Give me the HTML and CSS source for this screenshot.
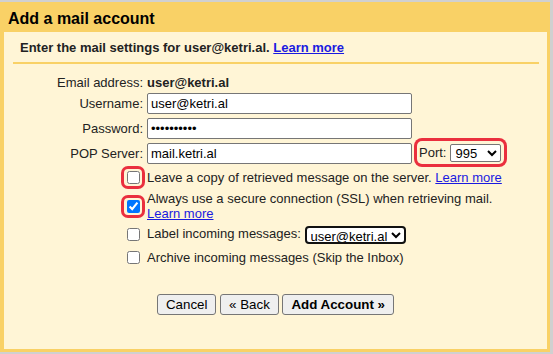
FILE: index.html
```html
<!DOCTYPE html>
<html lang="en">

<head>
  <meta charset="UTF-8">
  <title>Add a mail account</title>
  <link rel="stylesheet" href="styles.css">
</head>

<body>
  <div class="dialog">
    <div class="title">Add a mail account</div>
    <div class="panel">
      <div class="intro">Enter the mail settings for user@ketri.al. <a href="#">Learn more</a></div>
      <div class="rule"></div>

      <!-- Form fields -->
      <table class="form">
        <tr class="row-email">
          <td class="label">Email address:</td>
          <td class="field"><b>user@ketri.al</b></td>
        </tr>
        <tr>
          <td class="label">Username:</td>
          <td class="field"><input type="text" class="text-input" value="user@ketri.al"></td>
        </tr>
        <tr>
          <td class="label">Password:</td>
          <td class="field"><input type="password" class="text-input" value="secret1234"></td>
        </tr>
        <tr>
          <td class="label">POP Server:</td>
          <td class="field"><input type="text" class="text-input" value="mail.ketri.al"><span class="hl port">Port:
              <select class="port-select">
                <option>995</option>
                <option>110</option>
              </select></span></td>
        </tr>
        <tr>
          <td class="label"><span class="hl hl-check"><input type="checkbox"></span></td>
          <td class="field">Leave a copy of retrieved message on the server. <a href="#">Learn more</a></td>
        </tr>
        <tr>
          <td class="label"><span class="hl hl-check"><input type="checkbox" checked></span></td>
          <td class="field">Always use a secure connection (SSL) when retrieving mail. <a href="#">Learn more</a></td>
        </tr>
        <tr>
          <td class="label"><input type="checkbox"></td>
          <td class="field">Label incoming messages: <select class="label-select">
              <option>user@ketri.al</option>
            </select></td>
        </tr>
        <tr>
          <td class="label"><input type="checkbox"></td>
          <td class="field">Archive incoming messages (Skip the Inbox)</td>
        </tr>
      </table>

      <div class="actions">
        <button class="btn">Cancel</button>
        <button class="btn">&laquo; Back</button>
        <button class="btn btn-main">Add Account &raquo;</button>
      </div>
    </div>
  </div>
</body>

</html>
```

FILE: styles.css
```css
* {
  box-sizing: border-box;
}

body {
  margin: 0;
  background: #d0d0d0;
  font-family: 'Liberation Sans', Arial, sans-serif;
  font-size: 13px;
  line-height: 15px;
  color: #222;
}

a {
  color: #1a1ae0;
}

.dialog {
  margin-top: 2px;
  width: 550px;
  background: #f9d166;
  padding: 0 3px 3px 4px;
}

.title {
  height: 30px;
  padding: 7px 4px 0;
  font-size: 16px;
  line-height: 20px;
  font-weight: 700;
  color: #000;
}

.panel {
  background: #fff5d6;
  min-height: 317px;
  padding-top: 8px;
}

.intro {
  padding: 0 16px;
  font-weight: 700;
}

.rule {
  height: 2px;
  margin: 7px 8px 0 9px;
  background: #f9d166;
}

.form {
  margin: 10px 0 0 4px;
  width: 504px;
  border-spacing: 0;
}

.form td {
  padding: 2px 0;
  vertical-align: middle;
}

.form .row-email td {
  padding: 1px 0;
}

.form td.label {
  width: 139px;
  padding-right: 4px;
  text-align: right;
  white-space: nowrap;
}

.text-input {
  width: 265px;
  height: 21px;
  padding: 1px 3px;
  border: 1px solid #767676;
  border-radius: 2px;
  background: #fff;
  font-family: inherit;
  font-size: 13px;
  color: #000;
  vertical-align: middle;
}

.hl {
  border-radius: 5px;
  box-shadow: 0 0 0 3px #ea2f3e;
}

.port {
  display: inline-flex;
  align-items: center;
  gap: 4px;
  height: 23px;
  margin: -2px 0 0 5px;
  padding: 0 3px 0 2px;
  vertical-align: middle;
}

.port-select {
  width: 51px;
  height: 18px;
  font-family: inherit;
  font-size: 13px;
  color: #000;
  background: #fff;
  border: 1px solid #767676;
  border-radius: 2px;
}

.hl-check {
  display: inline-block;
  margin: 1px 1px 1px 0;
  border-radius: 4px;
  vertical-align: middle;
  line-height: 0;
}

.hl-check input {
  margin: 2px 2px 2px 3px;
}

.form input[type="checkbox"] {
  vertical-align: middle;
}

.label-select {
  width: 101px;
  height: 18px;
  border: 2px solid #111;
  border-radius: 4px;
  background: #fff;
  font-family: inherit;
  font-size: 13px;
  color: #000;
  vertical-align: middle;
}

.actions {
  margin-top: 25px;
  text-align: center;
}

.btn {
  height: 21px;
  padding: 1px 8px;
  border: 1px solid #767676;
  border-radius: 3px;
  background: #efefef;
  font-family: inherit;
  font-size: 13.333px;
  color: #000;
}

.btn-main {
  font-weight: 700;
}
```
